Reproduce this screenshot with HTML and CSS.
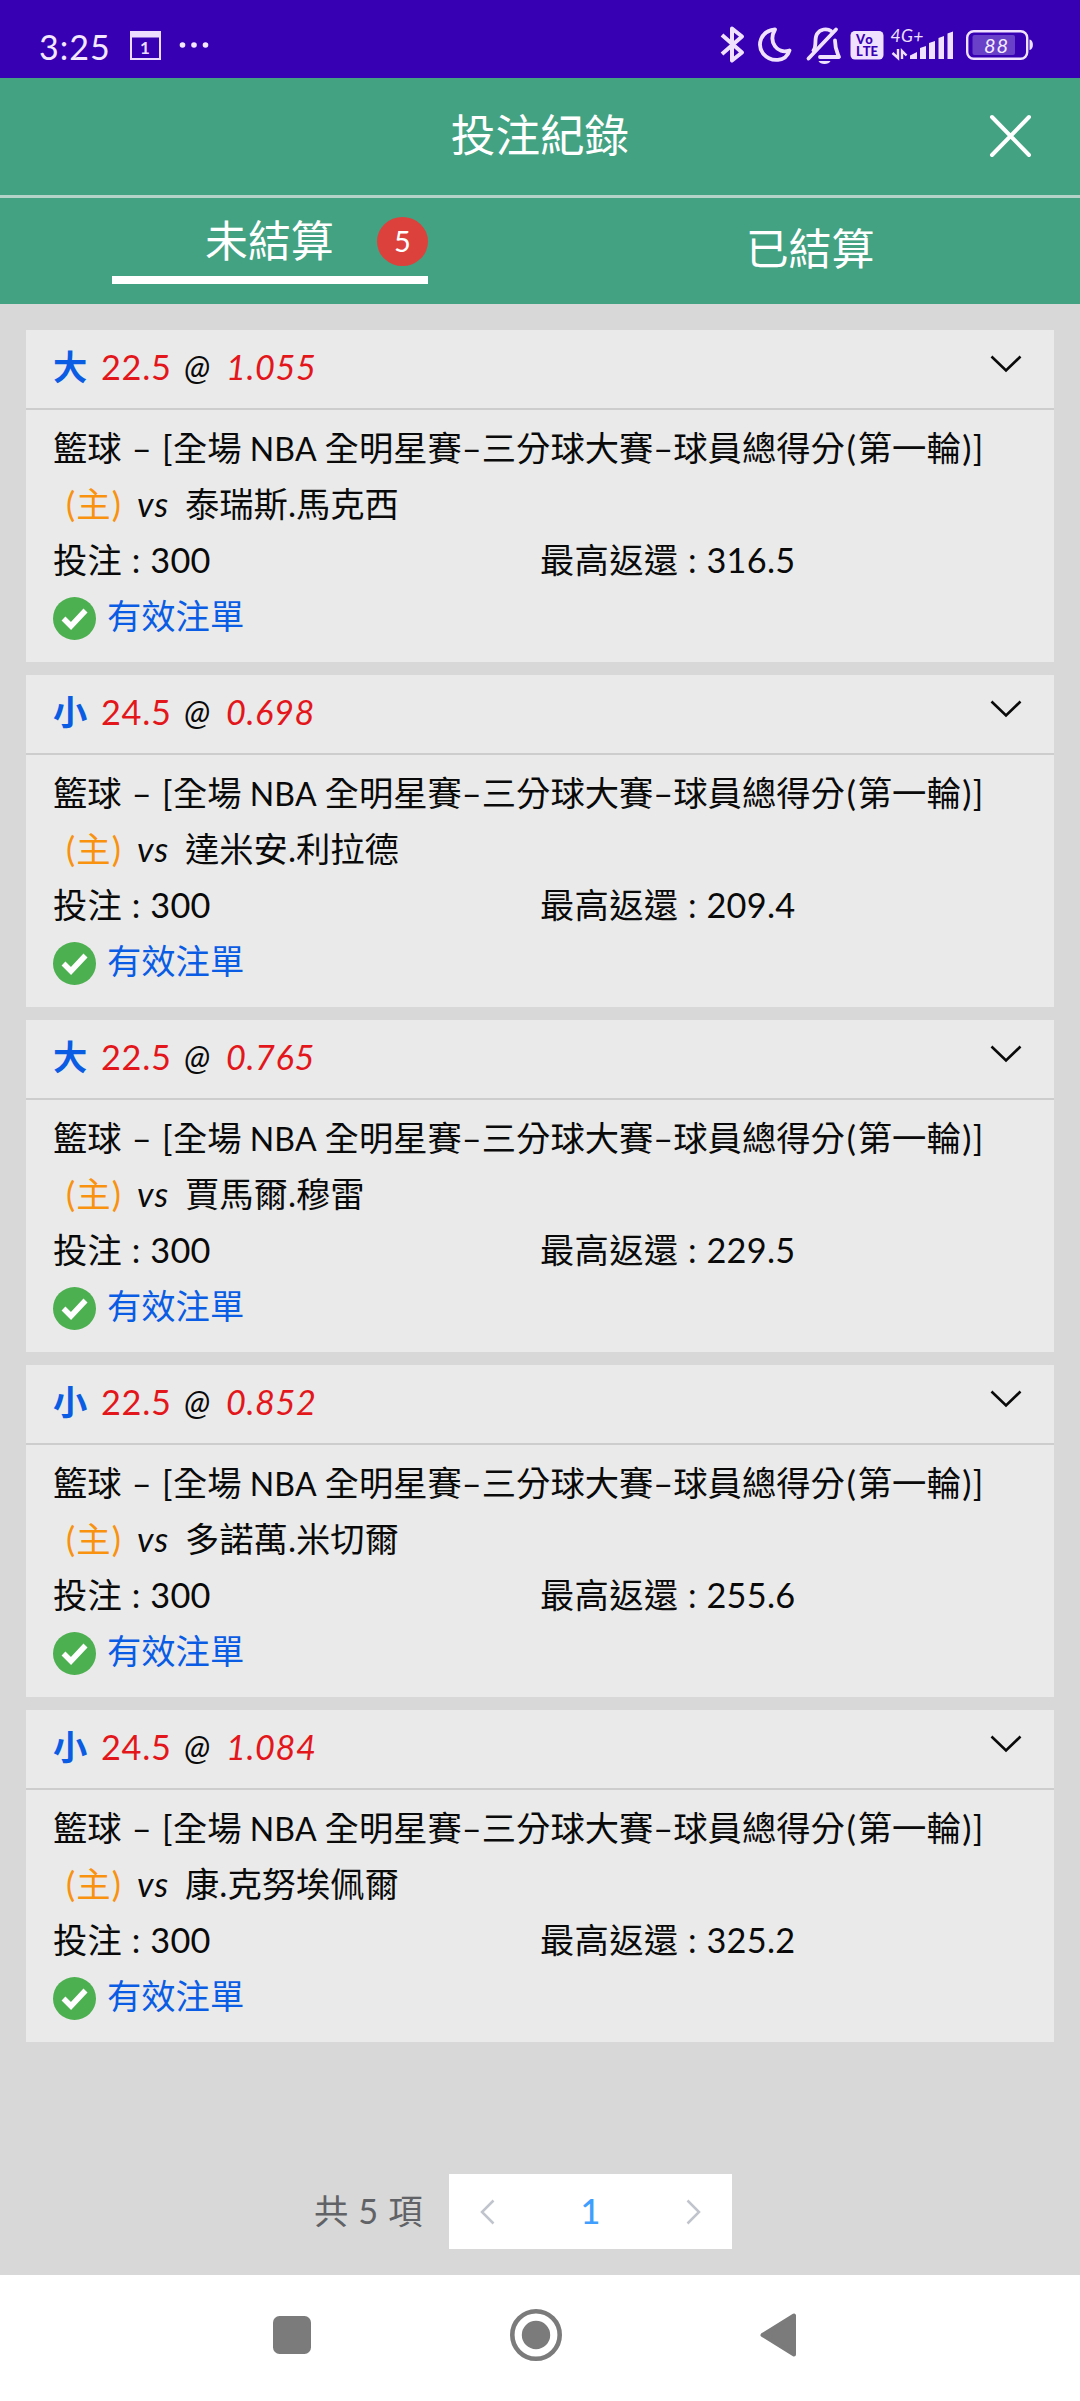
FILE: index.html
```html
<!DOCTYPE html>
<html lang="zh-Hant">
<head>
<meta charset="utf-8">
<title>投注紀錄</title>
<link rel="stylesheet" href="styles.css">
</head>
<body>
<svg class="defs" aria-hidden="true">
  <symbol id="chevron" viewBox="0 0 32 18"><path d="M1.500 1.500 16 15.500 30.500 1.500" fill="none" stroke="currentColor" stroke-width="2.600"/></symbol>
  <symbol id="check" viewBox="0 0 43 43"><circle cx="21.500" cy="21.500" r="21.500" fill="#4caf50"/><path d="M10.500 21.500 18 29 32.500 13.500" fill="none" stroke="#fff" stroke-width="5.500"/></symbol>
</svg>

<div class="statusbar">
  <span class="clock">3:25</span>
  <svg class="calendar" width="31" height="29" viewBox="0 0 31 29"><path d="M0 0h31v29H0zM2 6.500v20.500h27V6.500z" fill="#ecdcff" fill-rule="evenodd"/><text x="15" y="22.500" text-anchor="middle" class="cal-day">1</text></svg>
  <svg class="more" width="30" height="8" viewBox="0 0 30 8"><g fill="#f3e8ff"><circle cx="3.500" cy="4" r="2.800"/><circle cx="15" cy="4" r="2.800"/><circle cx="26.500" cy="4" r="2.800"/></g></svg>
  <div class="indicators">
    <svg width="38" height="78" viewBox="714 0 38 78"><path d="M723 35 743 52.500 733 60.500V28.500L743 36.500 723 54" fill="none" stroke="#f0e2ff" stroke-width="4" stroke-linejoin="round"/></svg>
    <svg width="48" height="78" viewBox="752 0 48 78"><path d="M776 29.500C761 31 758 45 764 53.500C772 63 787 62 790.500 50.500C778 54.500 769 42 776 29.500Z" fill="none" stroke="#f0e2ff" stroke-width="3.800" stroke-linejoin="round"/></svg>
    <svg width="47" height="78" viewBox="800 0 47 78"><g fill="none" stroke="#f0e2ff" stroke-width="3.800" stroke-linejoin="round" stroke-linecap="round"><path d="M809.500 58.500 837 29.500"/><path d="M814.500 50.500C818 46 815 39 818 34C821 29 828 28 832 31M836 40.500C836 49 838 52 840 57H821"/></g><path d="M819.500 61h12c-1.500 4-10.500 4-12 0z" fill="#f0e2ff"/></svg>
    <svg width="41" height="78" viewBox="847 0 41 78"><rect x="851.500" y="31" width="33" height="28.500" rx="4.500" fill="#f0e2ff"/><g class="volte"><text x="857" y="44">Vo</text><text x="857" y="56" textLength="22">LTE</text></g></svg>
    <svg width="72" height="78" viewBox="888 0 72 78"><text class="net" x="891.500" y="42" textLength="33">4G+</text><path d="M911 59v-3.500L918 52v7zM921 59V48l6-2v13zM930 59V43l6-2v18zM939.500 59V38l5.500-2v23zM948.500 59V33.500l5.500-2V59z" fill="#f0e2ff"/><path d="M899 49v9l-5.500-5M903 59v-8l4.500 4.500" fill="none" stroke="#f0e2ff" stroke-width="2.400"/></svg>
    <svg width="80" height="78" viewBox="960 0 80 78"><rect x="968.200" y="31.200" width="60" height="27.500" rx="6.500" fill="none" stroke="#f0e2ff" stroke-width="2.400"/><rect x="973.500" y="35" width="42.500" height="20" rx="2" fill="#6941c9"/><path d="M1030.500 39.500c4.500 0 4.500 10.500 0 10.500z" fill="#f0e2ff"/><text class="level" x="997.500" y="53" text-anchor="middle">88</text></svg>
  </div>
</div>

<header class="titlebar">
  <h1>投注紀錄</h1>
  <svg class="close" width="43" height="44" viewBox="0 0 43 44"><path d="M3 3 40 41M40 3 3 41" stroke="#fff" stroke-width="4" stroke-linecap="round"/></svg>
</header>

<nav class="tabs">
  <div class="tab active"><div class="tab-inner"><span>未結算</span><span class="badge">5</span></div></div>
  <div class="tab"><span>已結算</span></div>
</nav>

<main class="list">
  <article class="card">
    <div class="card-head"><b>大</b><span class="line">22.5</span><span class="at">@</span><span class="odds">1.055</span><svg class="chevron"><use href="#chevron"/></svg></div>
    <div class="card-body">
      <p>籃球<span class="dash wide"> – </span><span class="lb">[</span>全場<span class="nba"> NBA </span>全明星賽<span class="dash">–</span>三分球大賽<span class="dash">–</span>球員總得分<span class="lp">(</span>第一輪<span class="rp">)</span>]</p>
      <p><span class="home">(主)</span><span class="vs">vs</span>泰瑞斯.馬克西</p>
      <p class="money"><span>投注<span class="colon">:</span>300</span><span>最高返還<span class="colon">:</span>316.5</span></p>
      <p class="state"><svg class="check"><use href="#check"/></svg>有效注單</p>
    </div>
  </article>
  <article class="card">
    <div class="card-head"><b>小</b><span class="line">24.5</span><span class="at">@</span><span class="odds">0.698</span><svg class="chevron"><use href="#chevron"/></svg></div>
    <div class="card-body">
      <p>籃球<span class="dash wide"> – </span><span class="lb">[</span>全場<span class="nba"> NBA </span>全明星賽<span class="dash">–</span>三分球大賽<span class="dash">–</span>球員總得分<span class="lp">(</span>第一輪<span class="rp">)</span>]</p>
      <p><span class="home">(主)</span><span class="vs">vs</span>達米安.利拉德</p>
      <p class="money"><span>投注<span class="colon">:</span>300</span><span>最高返還<span class="colon">:</span>209.4</span></p>
      <p class="state"><svg class="check"><use href="#check"/></svg>有效注單</p>
    </div>
  </article>
  <article class="card">
    <div class="card-head"><b>大</b><span class="line">22.5</span><span class="at">@</span><span class="odds">0.765</span><svg class="chevron"><use href="#chevron"/></svg></div>
    <div class="card-body">
      <p>籃球<span class="dash wide"> – </span><span class="lb">[</span>全場<span class="nba"> NBA </span>全明星賽<span class="dash">–</span>三分球大賽<span class="dash">–</span>球員總得分<span class="lp">(</span>第一輪<span class="rp">)</span>]</p>
      <p><span class="home">(主)</span><span class="vs">vs</span>賈馬爾.穆雷</p>
      <p class="money"><span>投注<span class="colon">:</span>300</span><span>最高返還<span class="colon">:</span>229.5</span></p>
      <p class="state"><svg class="check"><use href="#check"/></svg>有效注單</p>
    </div>
  </article>
  <article class="card">
    <div class="card-head"><b>小</b><span class="line">22.5</span><span class="at">@</span><span class="odds">0.852</span><svg class="chevron"><use href="#chevron"/></svg></div>
    <div class="card-body">
      <p>籃球<span class="dash wide"> – </span><span class="lb">[</span>全場<span class="nba"> NBA </span>全明星賽<span class="dash">–</span>三分球大賽<span class="dash">–</span>球員總得分<span class="lp">(</span>第一輪<span class="rp">)</span>]</p>
      <p><span class="home">(主)</span><span class="vs">vs</span>多諾萬.米切爾</p>
      <p class="money"><span>投注<span class="colon">:</span>300</span><span>最高返還<span class="colon">:</span>255.6</span></p>
      <p class="state"><svg class="check"><use href="#check"/></svg>有效注單</p>
    </div>
  </article>
  <article class="card">
    <div class="card-head"><b>小</b><span class="line">24.5</span><span class="at">@</span><span class="odds">1.084</span><svg class="chevron"><use href="#chevron"/></svg></div>
    <div class="card-body">
      <p>籃球<span class="dash wide"> – </span><span class="lb">[</span>全場<span class="nba"> NBA </span>全明星賽<span class="dash">–</span>三分球大賽<span class="dash">–</span>球員總得分<span class="lp">(</span>第一輪<span class="rp">)</span>]</p>
      <p><span class="home">(主)</span><span class="vs">vs</span>康.克努埃佩爾</p>
      <p class="money"><span>投注<span class="colon">:</span>300</span><span>最高返還<span class="colon">:</span>325.2</span></p>
      <p class="state"><svg class="check"><use href="#check"/></svg>有效注單</p>
    </div>
  </article>
</main>

<footer class="pager">
  <span class="total">共 5 項</span>
  <div class="pages">
    <svg width="15" height="26" viewBox="0 0 15 26"><path d="M13.500 1.500 2 13 13.500 24.500" fill="none" stroke="#c0c4cc" stroke-width="2.500"/></svg>
    <span class="current">1</span>
    <svg width="15" height="26" viewBox="0 0 15 26"><path d="M1.500 1.500 13 13 1.500 24.500" fill="none" stroke="#c0c4cc" stroke-width="2.500"/></svg>
  </div>
</footer>

<div class="navbar">
  <svg width="38" height="38" viewBox="0 0 38 38"><rect width="38" height="38" rx="6.500" fill="#7b7b7b"/></svg>
  <svg width="52" height="52" viewBox="0 0 52 52"><circle cx="26" cy="26" r="23.700" fill="none" stroke="#7b7b7b" stroke-width="4.600"/><circle cx="26" cy="26" r="14.200" fill="#7b7b7b"/></svg>
  <svg width="37" height="44" viewBox="0 0 37 44"><path d="M2.500 22 34 2.500V41.500Z" fill="#7b7b7b" stroke="#7b7b7b" stroke-width="4" stroke-linejoin="round"/></svg>
</div>
</body>
</html>
```
FILE: styles.css
```css
* { box-sizing: border-box; }

body {
  margin: 0;
  width: 1080px;
  height: 2401px;
  display: flex;
  flex-direction: column;
  background: #d8d8d8;
  color: #0a0a0a;
  font-family: Lato, "Noto Sans CJK TC", sans-serif;
  font-size: 34.3px;
  font-kerning: none;
}

svg { display: block; flex: none; }
p, h1 { margin: 0; font-weight: 400; }
.defs { position: absolute; width: 0; height: 0; }

/* status bar */
.statusbar {
  height: 78px;
  flex: none;
  display: flex;
  align-items: center;
  background: #3800b3;
  padding: 0 41px 0 39px;
}
.clock { width: 91px; color: #f3e8ff; font-size: 34px; letter-spacing: 1px; line-height: 40px; margin-top: 15px; }
.calendar { margin-top: 12px; }
.cal-day { font-size: 17px; font-weight: 700; fill: #ecdcff; }
.more { margin: 12px 0 0 18px; }
.indicators { display: flex; margin-left: auto; }
.volte { font-size: 13px; font-weight: 900; fill: #3800b3; }
.net { font-size: 17.5px; font-style: italic; fill: #f0e2ff; }
.level { font-size: 20px; font-style: italic; fill: #f6edff; letter-spacing: 1px; }

/* title */
.titlebar {
  height: 120px;
  flex: none;
  display: grid;
  grid-template-columns: 1fr auto 1fr;
  align-items: center;
  background: #42a282;
  color: #fff;
  border-bottom: 3px solid #b5d3c8;
}
.titlebar h1 { grid-column: 2; font-size: 44.6px; line-height: 60px; margin-bottom: 3px; }
.close { justify-self: end; margin: 0 48px 1px 0; }

/* tabs */
.tabs {
  height: 106px;
  flex: none;
  display: grid;
  grid-template-columns: 1fr 1fr;
  background: #42a282;
  color: #fff;
  font-size: 42.9px;
}
.tab { display: flex; justify-content: center; align-items: center; line-height: 60px; }
.tab > span { margin-bottom: 4px; }
.tab-inner {
  width: 316px;
  height: 76px;
  display: flex;
  align-items: center;
  padding: 0 0 1px 93px;
  border-bottom: 8px solid #fff;
  margin-top: -11px;
}
.badge {
  width: 51px;
  height: 49px;
  margin-left: auto;
  border-radius: 50%;
  background: #dd413c;
  font-size: 29px;
  line-height: 48px;
  text-align: center;
}

/* bet cards */
.list { padding: 26px 26px 0; display: flex; flex-direction: column; gap: 13px; }
.card { height: 332px; background: #eaeaea; }
.card-head {
  height: 80px;
  display: flex;
  align-items: center;
  border-bottom: 2px solid #cdcdcd;
  padding: 0 32px 4px 27px;
  line-height: 50px;
}
.card-head b { width: 48px; color: #0b5ce4; }
.line { width: 83px; color: #e3171b; letter-spacing: .7px; }
.at { width: 42px; font-style: italic; font-size: 34px; }
.odds { color: #e3171b; font-style: italic; letter-spacing: .6px; }
.chevron { width: 32px; height: 18px; margin: -6px 0 0 auto; color: #0a0a0a; }
.card-body { padding: 10px 26px 0 27px; }
.card-body p { height: 56px; line-height: 56px; white-space: pre; }
.card-body p span { display: inline-block; }
.card-body .dash { width: 20px; text-align: center; }
.card-body .wide { width: 40.4px; }
.card-body .lb { width: 11px; }
.card-body .nba { width: 83px; text-align: center; font-size: 32px; }
.card-body .lp { width: 13px; text-align: center; }
.card-body .rp { width: 12px; text-align: center; }
.card-body .home { color: #f8920f; padding-left: 13px; width: 84px; letter-spacing: 1.2px; }
.card-body .vs { width: 48px; font-style: italic; letter-spacing: 1px; }
.card-body .money { display: grid; grid-template-columns: 487px 1fr; letter-spacing: .3px; }
.card-body .colon { width: 28px; text-align: center; }
.card-body .state { display: flex; align-items: center; color: #0b5ce4; gap: 11px; }
.check { width: 43px; height: 43px; margin-top: 4px; }

/* pagination */
.pager { display: flex; align-items: center; margin-top: auto; padding: 0 0 26px 314px; }
.total { width: 135px; color: #606266; letter-spacing: .6px; margin-bottom: 6px; }
.pages {
  width: 283px;
  height: 75px;
  display: flex;
  align-items: center;
  justify-content: space-between;
  padding: 0 31px;
  background: #fff;
}
.current { color: #409eff; font-weight: 500; margin-bottom: 2px; }

/* system navigation */
.navbar {
  height: 126px;
  flex: none;
  display: flex;
  align-items: center;
  background: #fff;
  padding: 0 283px 7px 273px;
  justify-content: space-between;
}
```
